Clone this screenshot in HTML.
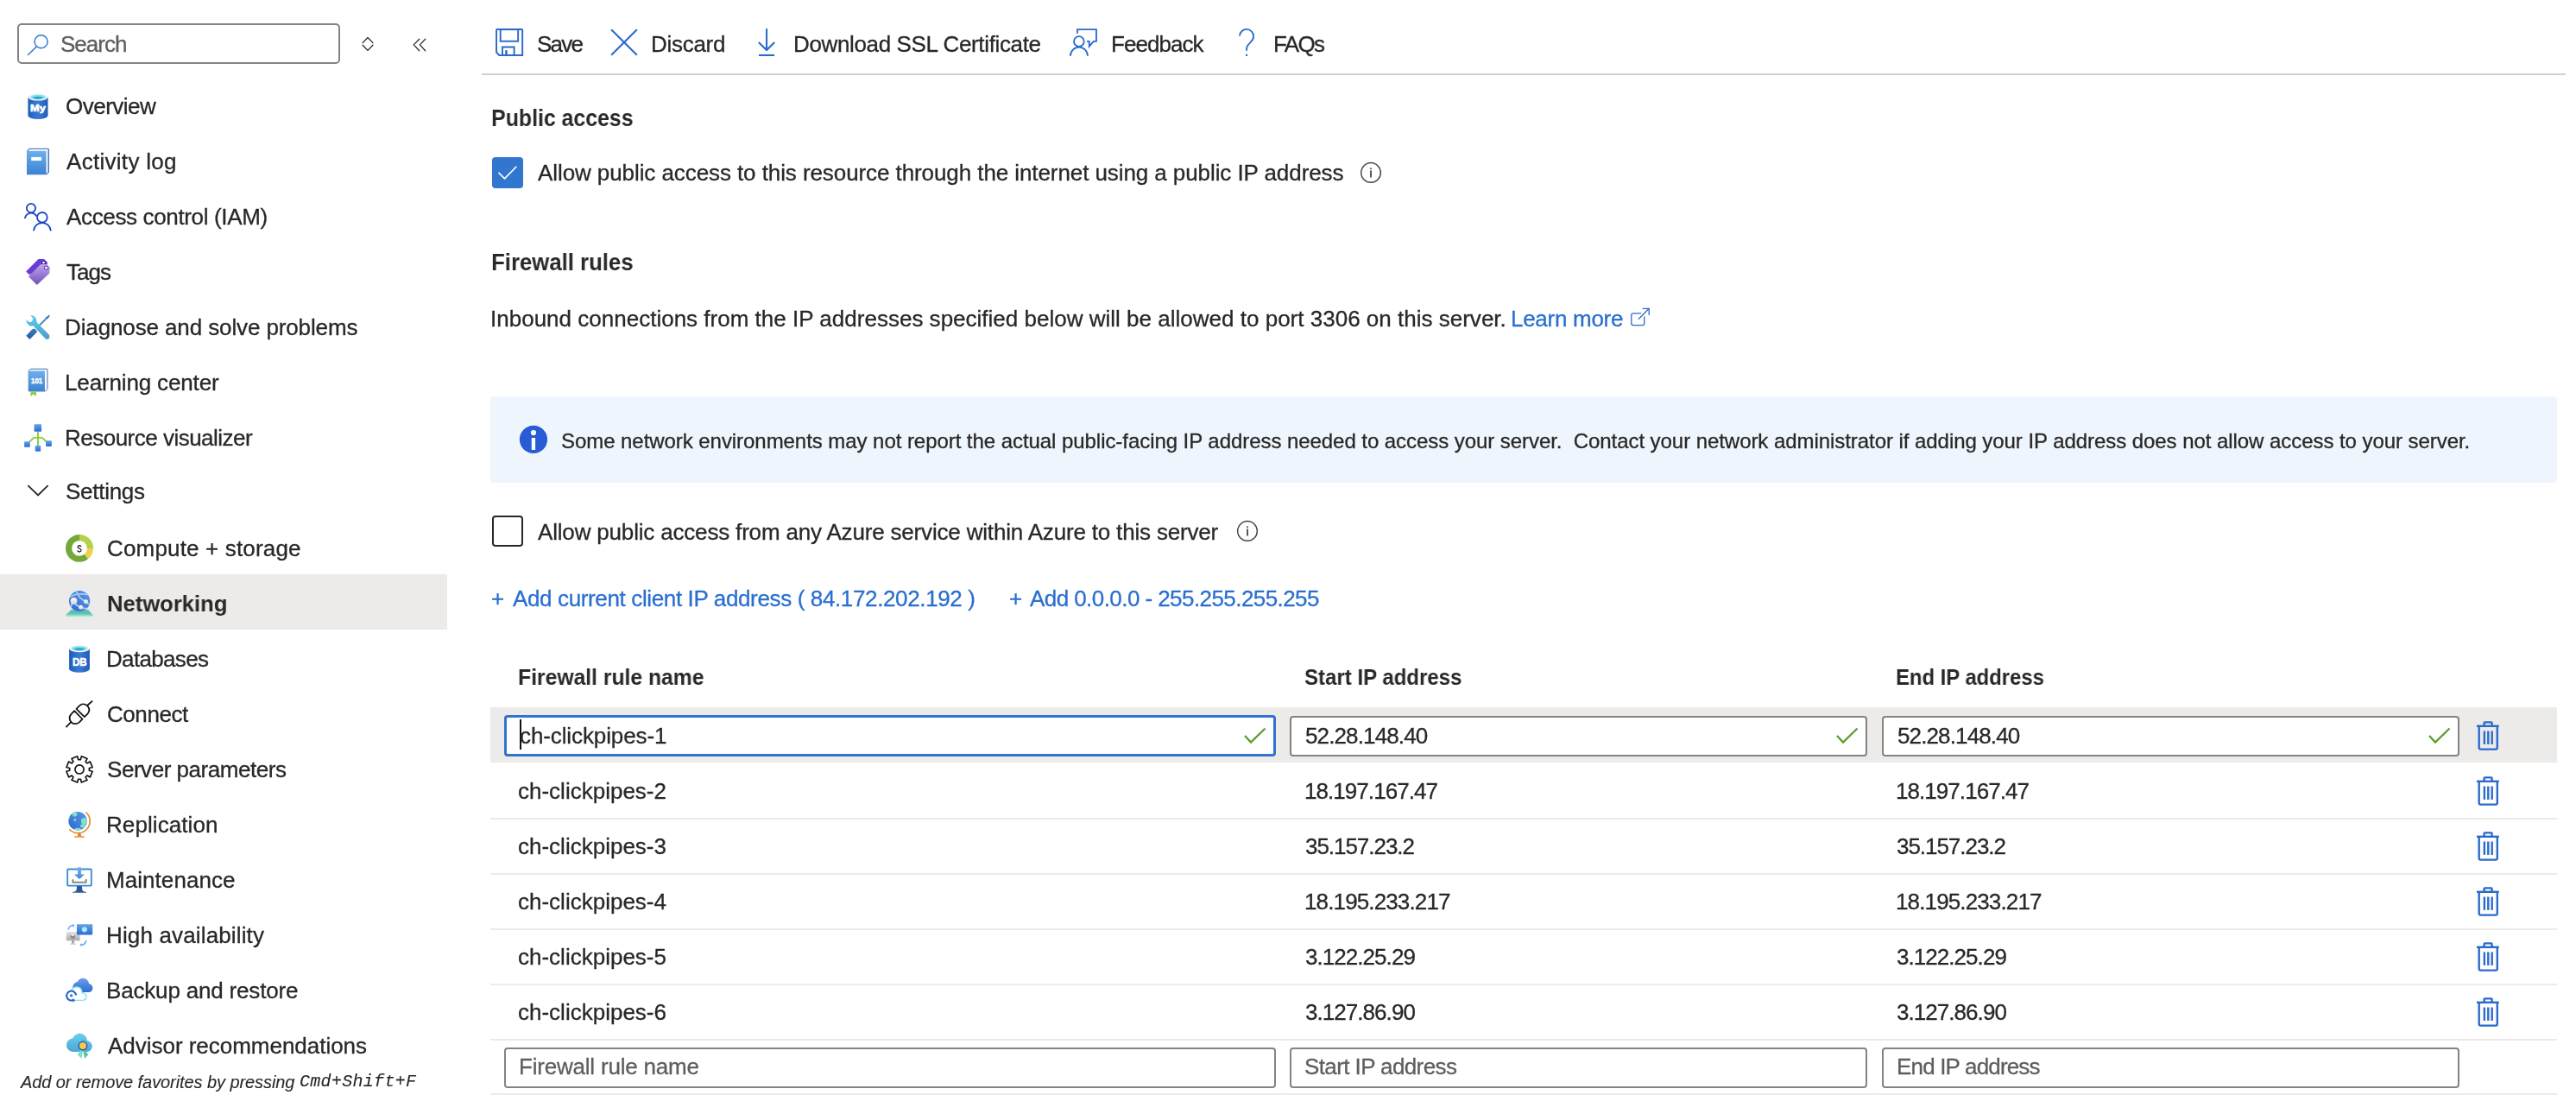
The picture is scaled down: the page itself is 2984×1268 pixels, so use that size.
<!DOCTYPE html>
<html><head><meta charset="utf-8">
<style>
html,body{margin:0;padding:0;background:#fff;}
body{width:2984px;height:1268px;position:relative;overflow:hidden;font-family:"Liberation Sans",sans-serif;}
.t{position:absolute;white-space:pre;-webkit-text-stroke:0.3px currentColor;will-change:transform;}
.a{position:absolute;}
svg.a{overflow:visible;}
.inp{position:absolute;box-sizing:border-box;border:2px solid #858381;border-radius:4px;background:#fff;}
.sep{position:absolute;left:568px;width:2394px;height:2px;background:#edebe9;}
</style></head><body>
<!-- search box -->
<div class="a" style="left:20px;top:27px;width:374px;height:47px;box-sizing:border-box;border:2px solid #858381;border-radius:5px"></div>
<!-- selected nav -->
<div class="a" style="left:0;top:665px;width:518px;height:64px;background:#edebe9"></div>
<!-- toolbar separator -->
<div class="a" style="left:558px;top:85px;width:2414px;height:2px;background:#d2d0ce"></div>
<!-- banner -->
<div class="a" style="left:568px;top:459px;width:2394px;height:100px;background:#eff5fd;border-radius:4px"></div>
<!-- checkboxes -->
<div class="a" style="left:570px;top:182px;width:36px;height:36px;background:#3276cf;border-radius:4px"></div>
<div class="a" style="left:570px;top:597px;width:36px;height:36px;box-sizing:border-box;border:2px solid #292827;border-radius:4px"></div>
<!-- table highlight row -->
<div class="a" style="left:568px;top:819px;width:2394px;height:64px;background:#edebe9"></div>
<div class="inp" style="left:584px;top:828px;width:894px;height:48px;border:3px solid #3074d0"></div>
<div class="inp" style="left:1494px;top:829px;width:669px;height:47px"></div>
<div class="inp" style="left:2180px;top:829px;width:669px;height:47px"></div>
<div class="sep" style="top:947px"></div>
<div class="sep" style="top:1011px"></div>
<div class="sep" style="top:1075px"></div>
<div class="sep" style="top:1139px"></div>
<div class="sep" style="top:1203px"></div>
<div class="sep" style="top:1266px"></div>
<div class="inp" style="left:584px;top:1213px;width:894px;height:47px"></div>
<div class="inp" style="left:1494px;top:1213px;width:669px;height:47px"></div>
<div class="inp" style="left:2180px;top:1213px;width:669px;height:47px"></div>
<svg width="0" height="0" style="position:absolute"><defs>
<linearGradient id="gCyl" x1="0" y1="0" x2="1" y2="0"><stop offset="0" stop-color="#1f5cb8"/><stop offset="0.5" stop-color="#3a7bd5"/><stop offset="1" stop-color="#1f5cb8"/></linearGradient>
<linearGradient id="gBook" x1="0" y1="0" x2="0" y2="1"><stop offset="0" stop-color="#6cb0ec"/><stop offset="1" stop-color="#3c82d6"/></linearGradient>
<linearGradient id="gTag" x1="0" y1="0" x2="0" y2="1"><stop offset="0" stop-color="#bea6ec"/><stop offset="1" stop-color="#7050bd"/></linearGradient>
<linearGradient id="gWr" x1="0" y1="0" x2="0" y2="1"><stop offset="0" stop-color="#60cdee"/><stop offset="1" stop-color="#4a9ccc"/></linearGradient>
<linearGradient id="gSd" x1="0" y1="0" x2="0" y2="1"><stop offset="0" stop-color="#3b7fbf"/><stop offset="1" stop-color="#2358a8"/></linearGradient>
<linearGradient id="gSq" x1="0" y1="0" x2="0" y2="1"><stop offset="0" stop-color="#64a2ec"/><stop offset="1" stop-color="#2a6ad2"/></linearGradient>
<linearGradient id="gGlobe" x1="1" y1="0" x2="0" y2="1"><stop offset="0" stop-color="#5d98e8"/><stop offset="1" stop-color="#2b68cf"/></linearGradient>
<linearGradient id="gNode" x1="0" y1="0" x2="0" y2="1"><stop offset="0" stop-color="#ffffff"/><stop offset="1" stop-color="#d4d4d4"/></linearGradient>
<linearGradient id="gArr" x1="0" y1="0" x2="0" y2="1"><stop offset="0" stop-color="#74b4ee"/><stop offset="1" stop-color="#3a86de"/></linearGradient>
<linearGradient id="gGray" x1="0" y1="0" x2="0" y2="1"><stop offset="0" stop-color="#e4e4e4"/><stop offset="1" stop-color="#aaaaaa"/></linearGradient>
<linearGradient id="gCloud" x1="0" y1="0" x2="0" y2="1"><stop offset="0" stop-color="#6e9fe8"/><stop offset="1" stop-color="#2e6dd0"/></linearGradient>
<linearGradient id="gCloud2" x1="0" y1="0" x2="0" y2="1"><stop offset="0" stop-color="#66d0f0"/><stop offset="1" stop-color="#4fa6d6"/></linearGradient>
<linearGradient id="gRib" x1="0" y1="0" x2="0" y2="1"><stop offset="0" stop-color="#9ad85a"/><stop offset="1" stop-color="#6cb53a"/></linearGradient>
<clipPath id="cpGlobe"><circle cx="505" cy="475" r="235"/></clipPath>
<clipPath id="cpNet"><circle cx="550" cy="505" r="265"/></clipPath>
</defs></svg>
<svg class="a" style="left:25px;top:27px" width="50" height="50" viewBox="0 0 1095 1095" ><g fill="none" stroke="#2f74d1" stroke-width="32"><circle cx="495" cy="465" r="165"/><line x1="378" y1="592" x2="165" y2="800" stroke-linecap="round"/></g></svg>
<svg class="a" style="left:400px;top:27px" width="110" height="50" viewBox="0 0 2409 1095" ><g fill="none" stroke="#323130" stroke-width="30" stroke-linecap="round" stroke-linejoin="round"><polyline points="440,495 570,360 700,495"/><polyline points="440,552 570,687 700,552"/><polyline points="1878,400 1735,545 1878,695"/><polyline points="2030,400 1890,545 2030,695"/></g></svg>
<svg class="a" style="left:20px;top:95px" width="50" height="50" viewBox="0 0 1095 1095" ><path d="M272,385 L272,852 A253.0,88 0 0 0 778,852 L778,385 Z" fill="url(#gCyl)"/>
<ellipse cx="525.0" cy="385" rx="253.0" ry="88" fill="#f2f2f2"/>
<ellipse cx="525.0" cy="381" rx="192.28" ry="59.84" fill="#6fe2fa"/>
<ellipse cx="525.0" cy="399" rx="126.5" ry="33.44" fill="#3c9dc4"/>
<text x="330" y="735" font-family="Liberation Sans" font-weight="bold" font-size="230" fill="#fff" stroke="#fff" stroke-width="14" textLength="390" lengthAdjust="spacingAndGlyphs">My</text></svg>
<svg class="a" style="left:67px;top:737px" width="50" height="50" viewBox="0 0 1095 1095" ><path d="M287,310 L287,827 A260.5,88 0 0 0 808,827 L808,310 Z" fill="url(#gCyl)"/>
<ellipse cx="547.5" cy="310" rx="260.5" ry="88" fill="#f2f2f2"/>
<ellipse cx="547.5" cy="306" rx="197.98" ry="59.84" fill="#6fe2fa"/>
<ellipse cx="547.5" cy="324" rx="130.25" ry="33.44" fill="#3c9dc4"/>
<text x="370" y="740" font-family="Liberation Sans" font-weight="bold" font-size="300" fill="#fff" stroke="#fff" stroke-width="14" textLength="365" lengthAdjust="spacingAndGlyphs">DB</text></svg>
<svg class="a" style="left:20px;top:160px" width="50" height="50" viewBox="0 0 1095 1095" ><path d="M255,325 L310,268 L780,268 Q798,268 798,290 L798,860 L740,912 L255,912 Z" fill="#fff" stroke="#2a5ea8" stroke-width="22" stroke-linejoin="round"/>
<rect x="775" y="290" width="25" height="570" fill="#5d8fc4"/>
<rect x="245" y="325" width="490" height="590" rx="12" fill="url(#gBook)"/>
<rect x="355" y="480" width="260" height="90" fill="#fff"/></svg>
<svg class="a" style="left:20px;top:230px" width="50" height="50" viewBox="0 0 1095 1095" ><g fill="none" stroke="#1747c8" stroke-width="40" stroke-linecap="round">
<circle cx="350" cy="240" r="112"/><path d="M197,490 A160,160 0 0 1 488,440"/>
<circle cx="632" cy="478" r="128"/><path d="M418,800 A217,217 0 0 1 848,800"/></g></svg>
<svg class="a" style="left:20px;top:290px" width="50" height="50" viewBox="0 0 1095 1095" ><polygon points="220,535 535,218 680,218 765,303 762,360 310,620" fill="#6a3dd6"/>
<circle cx="668" cy="308" r="42" fill="#fff" stroke="#2a1870" stroke-width="22"/>
<polygon points="285,665 595,350 745,350 830,432 815,578 500,875" fill="url(#gTag)"/>
<circle cx="735" cy="440" r="44" fill="#fff" stroke="#5b3ab5" stroke-width="22"/></svg>
<svg class="a" style="left:20px;top:355px" width="50" height="50" viewBox="0 0 1095 1095" ><line x1="560" y1="480" x2="730" y2="310" stroke="#3a80bb" stroke-width="42"/>
<polygon points="700,290 805,212 832,228 765,325" fill="#3a80bb"/>
<polygon points="225,740 380,575 440,560 505,625 485,665 315,830" fill="url(#gSd)"/>
<path d="M330,222 C420,215 500,290 495,400 L800,705 C840,745 820,830 755,830 C730,830 715,815 700,800 L405,490 C320,510 240,470 225,330 L285,385 C320,405 370,395 390,345 C405,300 380,250 330,222 Z" fill="url(#gWr)"/></svg>
<svg class="a" style="left:20px;top:418px" width="50" height="50" viewBox="0 0 1095 1095" ><path d="M290,250 L335,202 L750,202 Q765,202 765,217 L765,710 L710,765 L290,765 Z" fill="#fff" stroke="#2b5aa0" stroke-width="20" stroke-linejoin="round"/>
<rect x="288" y="250" width="412" height="515" fill="url(#gBook)"/>
<text x="350" y="572" font-family="Liberation Sans" font-weight="bold" font-size="190" fill="#fff" stroke="#fff" stroke-width="10" textLength="290" lengthAdjust="spacingAndGlyphs">101</text>
<polygon points="340,765 480,765 480,895 410,840 340,895" fill="url(#gRib)"/></svg>
<svg class="a" style="left:20px;top:482px" width="50" height="50" viewBox="0 0 1095 1095" ><g fill="none" stroke="#86d03c" stroke-width="42" stroke-linejoin="round"><path d="M525,390 L525,745"/><path d="M310,650 L420,545 L630,545 L735,640"/></g>
<g fill="url(#gSq)"><rect x="430" y="200" width="185" height="190" rx="14"/><rect x="178" y="640" width="147" height="145" rx="14"/><rect x="725" y="620" width="147" height="145" rx="14"/><rect x="455" y="745" width="140" height="145" rx="14"/></g></svg>
<svg class="a" style="left:20px;top:543px" width="50" height="50" viewBox="0 0 1095 1095" ><polyline points="270,420 527,668 780,420" fill="none" stroke="#292827" stroke-width="40"/></svg>
<svg class="a" style="left:67px;top:610px" width="50" height="50" viewBox="0 0 1095 1095" ><g transform="rotate(-90 548 545)" fill="none" stroke-width="155">
<circle cx="548" cy="545" r="272.5" stroke="#b3d14c" stroke-dasharray="428.0 1712.2"/>
<circle cx="548" cy="545" r="272.5" stroke="#f2d14a" stroke-dasharray="0 428.0 237.8 1712.2"/>
<circle cx="548" cy="545" r="272.5" stroke="#74a93a" stroke-dasharray="0 665.8 1046.3 1712.2"/></g>
<path d="M588,495 C565,468 505,470 505,515 C505,560 592,548 592,595 C592,640 520,645 498,608" fill="none" stroke="#111" stroke-width="26" stroke-linecap="round"/><line x1="550" y1="462" x2="550" y2="478" stroke="#111" stroke-width="22"/><line x1="540" y1="628" x2="540" y2="645" stroke="#111" stroke-width="22"/></svg>
<svg class="a" style="left:67px;top:673px" width="50" height="50" viewBox="0 0 1095 1095" ><polygon points="200,860 340,725 770,725 895,860" fill="#66bfae"/>
<rect x="200" y="842" width="695" height="52" rx="24" fill="#7ae8d2"/>
<circle cx="550" cy="505" r="265" fill="url(#gGlobe)"/>
<g clip-path="url(#cpNet)" fill="none" stroke="#a9cdf0" stroke-width="38"><path d="M300,400 C420,320 580,300 800,350"/><path d="M460,250 L560,420 L700,520 L820,600"/><path d="M330,600 L410,560 L590,680 L800,700"/><path d="M330,660 L360,560"/></g>
<circle cx="405" cy="500" r="85" fill="url(#gNode)"/><circle cx="712" cy="520" r="55" fill="url(#gNode)"/><circle cx="585" cy="660" r="55" fill="url(#gNode)"/></svg>
<svg class="a" style="left:67px;top:801px" width="50" height="50" viewBox="0 0 1095 1095" ><g fill="none" stroke="#111" stroke-width="38" stroke-linejoin="round">
<line x1="205" y1="900" x2="345" y2="760"/><line x1="745" y1="350" x2="880" y2="232"/>
<path d="M420,485 L625,695 L540,780 C470,835 370,820 330,760 C280,690 300,610 345,560 Z"/>
<path d="M470,435 L675,640 L760,555 C810,490 800,410 745,355 C680,300 600,300 550,355 Z"/></g></svg>
<svg class="a" style="left:67px;top:865px" width="50" height="50" viewBox="0 0 1095 1095" ><g fill="none" stroke="#111" stroke-width="36" stroke-linejoin="round"><path d="M600,237 L745,297 L702,371 L745,414 L819,371 L879,516 L796,538 L796,598 L879,620 L819,765 L745,722 L702,765 L745,839 L600,899 L578,816 L518,816 L496,899 L351,839 L394,765 L351,722 L277,765 L217,620 L300,598 L300,538 L217,516 L277,371 L351,414 L394,371 L351,297 L496,237 L518,320 L578,320 Z"/><circle cx="548" cy="568" r="112"/></g></svg>
<svg class="a" style="left:67px;top:929px" width="50" height="50" viewBox="0 0 1095 1095" ><circle cx="505" cy="475" r="235" fill="url(#gGlobe)"/>
<g clip-path="url(#cpGlobe)" fill="#7de3c5"><circle cx="430" cy="300" r="62"/><circle cx="280" cy="390" r="30"/><circle cx="435" cy="450" r="32"/><ellipse cx="665" cy="480" rx="75" ry="85"/><ellipse cx="640" cy="600" rx="70" ry="45"/><ellipse cx="510" cy="700" rx="90" ry="50"/></g>
<path d="M722,262 A300,300 0 0 1 300,695" fill="none" stroke="#e8872e" stroke-width="36" stroke-linecap="round"/>
<polygon points="520,790 575,790 600,860 495,860" fill="#e07a25"/><rect x="420" y="860" width="255" height="35" rx="12" fill="#e8872e"/></svg>
<svg class="a" style="left:67px;top:993px" width="50" height="50" viewBox="0 0 1095 1095" ><rect x="245" y="295" width="605" height="420" rx="18" fill="#fff" stroke="#3a8ad8" stroke-width="40"/>
<polygon points="485,720 610,720 620,820 650,860 720,878 720,895 375,895 375,878 445,860 475,820" fill="#2d55a0"/>
<path d="M380,570 L380,630 L715,630 L715,570" fill="none" stroke="#8a8a8a" stroke-width="48" stroke-linecap="round" stroke-linejoin="round"/>
<path d="M505,245 L590,245 L590,425 L680,425 L548,550 L415,425 L505,425 Z" fill="url(#gArr)"/></svg>
<svg class="a" style="left:67px;top:1057px" width="50" height="50" viewBox="0 0 1095 1095" ><rect x="215" y="480" width="345" height="225" rx="12" fill="url(#gGray)"/>
<rect x="355" y="705" width="60" height="60" fill="#959595"/><polygon points="300,805 470,805 420,760 350,760" fill="#c8c8c8"/>
<polygon points="380,525 440,560 440,630 380,665 320,630 320,560" fill="#8a8a8a"/><polygon points="380,525 440,560 380,595 320,560" fill="#eeeeee"/>
<rect x="480" y="290" width="400" height="270" rx="10" fill="url(#gSq)"/>
<polygon points="675,350 740,388 740,462 675,500 610,462 610,388" fill="#aeeaf8"/>
<g fill="none" stroke="#6ea8ef" stroke-width="38"><path d="M265,430 A120,120 0 0 1 385,320"/><path d="M715,705 A120,120 0 0 1 595,815"/></g>
<polygon points="380,275 428,325 380,372" fill="#6ea8ef"/><polygon points="600,765 555,812 600,862" fill="#6ea8ef"/></svg>
<svg class="a" style="left:67px;top:1121px" width="50" height="50" viewBox="0 0 1095 1095" ><path d="M380,520 C370,420 430,360 500,350 C530,280 590,255 640,258 C720,260 780,320 790,395 C850,410 890,460 885,520 C880,580 830,615 780,615 L420,615 Z" fill="url(#gCloud)"/>
<path d="M340,580 C380,490 460,470 520,485 C590,505 615,560 612,628 C680,640 722,680 722,730 C718,790 680,818 620,818 L420,818 C330,818 300,700 340,580 Z" fill="#fff" stroke="#7de3f7" stroke-width="30"/>
<circle cx="342" cy="700" r="112" fill="#fff"/><path d="M462,690 A120,120 0 1 0 395,810" fill="none" stroke="#2363d0" stroke-width="45"/>
<polygon points="380,765 445,815 380,870" fill="#2f6fd6"/>
<circle cx="342" cy="698" r="38" fill="#3a78d8"/></svg>
<svg class="a" style="left:67px;top:1185px" width="50" height="50" viewBox="0 0 1095 1095" ><path d="M220,560 C220,450 300,390 375,385 C410,310 480,258 555,258 C660,258 740,340 745,440 C820,460 875,520 870,590 C865,670 800,720 740,720 L390,720 C290,720 220,650 220,560 Z" fill="url(#gCloud2)"/>
<polygon points="570,680 635,690 600,890 500,800" fill="#76e0c8"/><polygon points="640,690 700,680 770,800 680,890" fill="#5fc0ae"/>
<circle cx="635" cy="570" r="120" fill="#2b5bb5"/><circle cx="635" cy="570" r="88" fill="#f5cb45"/></svg>
<svg class="a" style="left:565px;top:24px" width="50" height="50" viewBox="0 0 1095 1095" ><g fill="none" stroke="#2b6acb" stroke-width="42" stroke-linejoin="miter">
<path d="M220,235 L238,218 L862,218 L880,235 L880,875 L292,875 L220,800 Z"/>
<rect x="322" y="222" width="448" height="298"/>
<path d="M372,870 L372,668 L670,668 L670,870"/>
<line x1="470" y1="748" x2="470" y2="870" stroke-width="55"/></g></svg>
<svg class="a" style="left:698px;top:24px" width="50" height="50" viewBox="0 0 1095 1095" ><g stroke="#2b6acb" stroke-width="46"><line x1="222" y1="222" x2="872" y2="872"/><line x1="872" y1="222" x2="222" y2="872"/></g></svg>
<svg class="a" style="left:862px;top:24px" width="50" height="50" viewBox="0 0 1095 1095" ><g fill="none" stroke="#2b6acb" stroke-width="46"><line x1="570" y1="200" x2="570" y2="745"/><polyline points="368,545 570,747 772,545"/><line x1="372" y1="875" x2="768" y2="875"/></g></svg>
<svg class="a" style="left:1230px;top:24px" width="50" height="50" viewBox="0 0 1095 1095" ><g fill="none" stroke="#2b6acb" stroke-width="40">
<circle cx="435" cy="525" r="128"/><path d="M218,890 A218,218 0 0 1 655,890"/>
<path d="M395,322 L395,220 L875,220 L875,522 L805,522 L695,650 L695,522 L635,522"/></g></svg>
<svg class="a" style="left:1419px;top:24px" width="50" height="50" viewBox="0 0 1095 1095" ><g fill="none" stroke="#2b6acb" stroke-width="40">
<path d="M370,385 C380,280 460,218 548,218 C650,218 725,300 725,400 C725,470 690,510 640,555 C580,610 548,640 548,720 L548,760"/></g>
<rect x="525" y="850" width="46" height="46" fill="#2b6acb"/></svg>
<svg class="a" style="left:560px;top:170px" width="60" height="60" viewBox="0 0 1095 1095" ><polyline points="320,545 448,672 700,415" fill="none" stroke="#fff" stroke-width="32"/></svg>
<svg class="a" style="left:1568px;top:180px" width="40" height="40" viewBox="0 0 1095 1095" ><circle cx="548" cy="545" r="310" fill="none" stroke="#4a4948" stroke-width="40"/><circle cx="548" cy="415" r="28" fill="#4a4948"/><line x1="548" y1="495" x2="548" y2="680" stroke="#4a4948" stroke-width="50" stroke-linecap="round"/></svg>
<svg class="a" style="left:1425px;top:595px" width="40" height="40" viewBox="0 0 1095 1095" ><circle cx="548" cy="545" r="310" fill="none" stroke="#4a4948" stroke-width="40"/><circle cx="548" cy="415" r="28" fill="#4a4948"/><line x1="548" y1="495" x2="548" y2="680" stroke="#4a4948" stroke-width="50" stroke-linecap="round"/></svg>
<svg class="a" style="left:1880px;top:345px" width="40" height="40" viewBox="0 0 1095 1095" ><g fill="none" stroke="#2b6acb" stroke-width="36" stroke-linecap="round"><path d="M565,488 L322,488 Q268,488 268,542 L268,810 Q268,865 322,865 L622,865 Q678,865 678,810 L678,598"/><line x1="502" y1="662" x2="822" y2="340"/><polyline points="632,338 825,338 828,532"/></g></svg>
<svg class="a" style="left:595px;top:485px" width="50" height="50" viewBox="0 0 1095 1095" ><circle cx="503" cy="523" r="352" fill="#275cd4"/><circle cx="503" cy="352" r="68" fill="#fff"/><rect x="455" y="482" width="95" height="306" fill="#fff"/></svg>
<svg class="a" style="left:1440px;top:840px" width="28" height="24" viewBox="0 0 28 24"><polyline points="2,12 9,19.5 25.5,3.5" fill="none" stroke="#5a9e2c" stroke-width="2.3"/></svg>
<svg class="a" style="left:2126px;top:840px" width="28" height="24" viewBox="0 0 28 24"><polyline points="2,12 9,19.5 25.5,3.5" fill="none" stroke="#5a9e2c" stroke-width="2.3"/></svg>
<svg class="a" style="left:2812px;top:840px" width="28" height="24" viewBox="0 0 28 24"><polyline points="2,12 9,19.5 25.5,3.5" fill="none" stroke="#5a9e2c" stroke-width="2.3"/></svg>
<svg class="a" style="left:2866px;top:834px" width="32" height="36" viewBox="0 0 32 36"><g fill="none" stroke="#2b6acb" stroke-width="2.4"><line x1="3" y1="6.8" x2="28.8" y2="6.8"/><path d="M11.6,6.8 L11.6,3.2 Q11.6,2.4 12.4,2.4 L19.8,2.4 Q20.6,2.4 20.6,3.2 L20.6,6.8"/><path d="M5.7,6.8 L5.7,31.8 Q5.7,33.6 7.5,33.6 L25,33.6 Q26.8,33.6 26.8,31.8 L26.8,6.8"/><line x1="11.9" y1="12.5" x2="11.9" y2="27.9"/><line x1="16.3" y1="12.5" x2="16.3" y2="27.9"/><line x1="20.7" y1="12.5" x2="20.7" y2="27.9"/></g></svg>
<svg class="a" style="left:2866px;top:898px" width="32" height="36" viewBox="0 0 32 36"><g fill="none" stroke="#2b6acb" stroke-width="2.4"><line x1="3" y1="6.8" x2="28.8" y2="6.8"/><path d="M11.6,6.8 L11.6,3.2 Q11.6,2.4 12.4,2.4 L19.8,2.4 Q20.6,2.4 20.6,3.2 L20.6,6.8"/><path d="M5.7,6.8 L5.7,31.8 Q5.7,33.6 7.5,33.6 L25,33.6 Q26.8,33.6 26.8,31.8 L26.8,6.8"/><line x1="11.9" y1="12.5" x2="11.9" y2="27.9"/><line x1="16.3" y1="12.5" x2="16.3" y2="27.9"/><line x1="20.7" y1="12.5" x2="20.7" y2="27.9"/></g></svg>
<svg class="a" style="left:2866px;top:962px" width="32" height="36" viewBox="0 0 32 36"><g fill="none" stroke="#2b6acb" stroke-width="2.4"><line x1="3" y1="6.8" x2="28.8" y2="6.8"/><path d="M11.6,6.8 L11.6,3.2 Q11.6,2.4 12.4,2.4 L19.8,2.4 Q20.6,2.4 20.6,3.2 L20.6,6.8"/><path d="M5.7,6.8 L5.7,31.8 Q5.7,33.6 7.5,33.6 L25,33.6 Q26.8,33.6 26.8,31.8 L26.8,6.8"/><line x1="11.9" y1="12.5" x2="11.9" y2="27.9"/><line x1="16.3" y1="12.5" x2="16.3" y2="27.9"/><line x1="20.7" y1="12.5" x2="20.7" y2="27.9"/></g></svg>
<svg class="a" style="left:2866px;top:1026px" width="32" height="36" viewBox="0 0 32 36"><g fill="none" stroke="#2b6acb" stroke-width="2.4"><line x1="3" y1="6.8" x2="28.8" y2="6.8"/><path d="M11.6,6.8 L11.6,3.2 Q11.6,2.4 12.4,2.4 L19.8,2.4 Q20.6,2.4 20.6,3.2 L20.6,6.8"/><path d="M5.7,6.8 L5.7,31.8 Q5.7,33.6 7.5,33.6 L25,33.6 Q26.8,33.6 26.8,31.8 L26.8,6.8"/><line x1="11.9" y1="12.5" x2="11.9" y2="27.9"/><line x1="16.3" y1="12.5" x2="16.3" y2="27.9"/><line x1="20.7" y1="12.5" x2="20.7" y2="27.9"/></g></svg>
<svg class="a" style="left:2866px;top:1090px" width="32" height="36" viewBox="0 0 32 36"><g fill="none" stroke="#2b6acb" stroke-width="2.4"><line x1="3" y1="6.8" x2="28.8" y2="6.8"/><path d="M11.6,6.8 L11.6,3.2 Q11.6,2.4 12.4,2.4 L19.8,2.4 Q20.6,2.4 20.6,3.2 L20.6,6.8"/><path d="M5.7,6.8 L5.7,31.8 Q5.7,33.6 7.5,33.6 L25,33.6 Q26.8,33.6 26.8,31.8 L26.8,6.8"/><line x1="11.9" y1="12.5" x2="11.9" y2="27.9"/><line x1="16.3" y1="12.5" x2="16.3" y2="27.9"/><line x1="20.7" y1="12.5" x2="20.7" y2="27.9"/></g></svg>
<svg class="a" style="left:2866px;top:1154px" width="32" height="36" viewBox="0 0 32 36"><g fill="none" stroke="#2b6acb" stroke-width="2.4"><line x1="3" y1="6.8" x2="28.8" y2="6.8"/><path d="M11.6,6.8 L11.6,3.2 Q11.6,2.4 12.4,2.4 L19.8,2.4 Q20.6,2.4 20.6,3.2 L20.6,6.8"/><path d="M5.7,6.8 L5.7,31.8 Q5.7,33.6 7.5,33.6 L25,33.6 Q26.8,33.6 26.8,31.8 L26.8,6.8"/><line x1="11.9" y1="12.5" x2="11.9" y2="27.9"/><line x1="16.3" y1="12.5" x2="16.3" y2="27.9"/><line x1="20.7" y1="12.5" x2="20.7" y2="27.9"/></g></svg>
<div class="a" style="left:602px;top:833px;width:2px;height:35px;background:#111"></div>
<div class="t" style="left:69.50px;top:36.00px;font-family:&quot;Liberation Sans&quot;, sans-serif;font-size:26px;line-height:30px;font-weight:normal;font-style:normal;color:#605e5c;letter-spacing:-0.984px">Search</div>
<div class="t" style="left:75.50px;top:108.00px;font-family:&quot;Liberation Sans&quot;, sans-serif;font-size:26px;line-height:30px;font-weight:normal;font-style:normal;color:#292827;letter-spacing:-0.511px">Overview</div>
<div class="t" style="left:76.50px;top:172.00px;font-family:&quot;Liberation Sans&quot;, sans-serif;font-size:26px;line-height:30px;font-weight:normal;font-style:normal;color:#292827;letter-spacing:0.291px">Activity log</div>
<div class="t" style="left:76.50px;top:236.00px;font-family:&quot;Liberation Sans&quot;, sans-serif;font-size:26px;line-height:30px;font-weight:normal;font-style:normal;color:#292827;letter-spacing:-0.351px">Access control (IAM)</div>
<div class="t" style="left:76.50px;top:300.00px;font-family:&quot;Liberation Sans&quot;, sans-serif;font-size:26px;line-height:30px;font-weight:normal;font-style:normal;color:#292827;letter-spacing:-0.973px">Tags</div>
<div class="t" style="left:74.50px;top:364.00px;font-family:&quot;Liberation Sans&quot;, sans-serif;font-size:26px;line-height:30px;font-weight:normal;font-style:normal;color:#292827;letter-spacing:-0.117px">Diagnose and solve problems</div>
<div class="t" style="left:74.50px;top:428.00px;font-family:&quot;Liberation Sans&quot;, sans-serif;font-size:26px;line-height:30px;font-weight:normal;font-style:normal;color:#292827;letter-spacing:-0.144px">Learning center</div>
<div class="t" style="left:74.50px;top:492.00px;font-family:&quot;Liberation Sans&quot;, sans-serif;font-size:26px;line-height:30px;font-weight:normal;font-style:normal;color:#292827;letter-spacing:-0.512px">Resource visualizer</div>
<div class="t" style="left:75.50px;top:554.00px;font-family:&quot;Liberation Sans&quot;, sans-serif;font-size:26px;line-height:30px;font-weight:normal;font-style:normal;color:#292827;letter-spacing:-0.278px">Settings</div>
<div class="t" style="left:123.50px;top:620.00px;font-family:&quot;Liberation Sans&quot;, sans-serif;font-size:26px;line-height:30px;font-weight:normal;font-style:normal;color:#292827;letter-spacing:0.163px">Compute + storage</div>
<div class="t" style="left:122.50px;top:748.00px;font-family:&quot;Liberation Sans&quot;, sans-serif;font-size:26px;line-height:30px;font-weight:normal;font-style:normal;color:#292827;letter-spacing:-0.662px">Databases</div>
<div class="t" style="left:123.50px;top:812.00px;font-family:&quot;Liberation Sans&quot;, sans-serif;font-size:26px;line-height:30px;font-weight:normal;font-style:normal;color:#292827;letter-spacing:-0.436px">Connect</div>
<div class="t" style="left:123.50px;top:876.00px;font-family:&quot;Liberation Sans&quot;, sans-serif;font-size:26px;line-height:30px;font-weight:normal;font-style:normal;color:#292827;letter-spacing:-0.456px">Server parameters</div>
<div class="t" style="left:122.50px;top:940.00px;font-family:&quot;Liberation Sans&quot;, sans-serif;font-size:26px;line-height:30px;font-weight:normal;font-style:normal;color:#292827;letter-spacing:0.083px">Replication</div>
<div class="t" style="left:122.50px;top:1004.00px;font-family:&quot;Liberation Sans&quot;, sans-serif;font-size:26px;line-height:30px;font-weight:normal;font-style:normal;color:#292827;letter-spacing:0.058px">Maintenance</div>
<div class="t" style="left:122.50px;top:1068.00px;font-family:&quot;Liberation Sans&quot;, sans-serif;font-size:26px;line-height:30px;font-weight:normal;font-style:normal;color:#292827;letter-spacing:0.147px">High availability</div>
<div class="t" style="left:122.50px;top:1132.00px;font-family:&quot;Liberation Sans&quot;, sans-serif;font-size:26px;line-height:30px;font-weight:normal;font-style:normal;color:#292827;letter-spacing:-0.177px">Backup and restore</div>
<div class="t" style="left:124.50px;top:1196.00px;font-family:&quot;Liberation Sans&quot;, sans-serif;font-size:26px;line-height:30px;font-weight:normal;font-style:normal;color:#292827;letter-spacing:-0.026px">Advisor recommendations</div>
<div class="t" style="left:123.50px;top:684.00px;font-family:&quot;Liberation Sans&quot;, sans-serif;font-size:26px;line-height:30px;font-weight:bold;font-style:normal;color:#292827;letter-spacing:0.000px;transform:scaleX(0.9844);transform-origin:1.00px 0;-webkit-text-stroke:0">Networking</div>
<div class="t" style="left:621.50px;top:36.00px;font-family:&quot;Liberation Sans&quot;, sans-serif;font-size:26px;line-height:30px;font-weight:normal;font-style:normal;color:#292827;letter-spacing:-1.767px">Save</div>
<div class="t" style="left:754.00px;top:36.00px;font-family:&quot;Liberation Sans&quot;, sans-serif;font-size:26px;line-height:30px;font-weight:normal;font-style:normal;color:#292827;letter-spacing:-0.278px">Discard</div>
<div class="t" style="left:919.00px;top:36.00px;font-family:&quot;Liberation Sans&quot;, sans-serif;font-size:26px;line-height:30px;font-weight:normal;font-style:normal;color:#292827;letter-spacing:-0.361px">Download SSL Certificate</div>
<div class="t" style="left:1286.50px;top:36.00px;font-family:&quot;Liberation Sans&quot;, sans-serif;font-size:26px;line-height:30px;font-weight:normal;font-style:normal;color:#292827;letter-spacing:-0.955px">Feedback</div>
<div class="t" style="left:1475.00px;top:36.00px;font-family:&quot;Liberation Sans&quot;, sans-serif;font-size:26px;line-height:30px;font-weight:normal;font-style:normal;color:#292827;letter-spacing:-1.671px">FAQs</div>
<div class="t" style="left:568.50px;top:121.00px;font-family:&quot;Liberation Sans&quot;, sans-serif;font-size:28px;line-height:31px;font-weight:bold;font-style:normal;color:#292827;letter-spacing:0.000px;transform:scaleX(0.8875);transform-origin:1.00px 0;-webkit-text-stroke:0">Public access</div>
<div class="t" style="left:623.00px;top:185.00px;font-family:&quot;Liberation Sans&quot;, sans-serif;font-size:26px;line-height:30px;font-weight:normal;font-style:normal;color:#292827;letter-spacing:-0.084px">Allow public access to this resource through the internet using a public IP address</div>
<div class="t" style="left:568.50px;top:288.00px;font-family:&quot;Liberation Sans&quot;, sans-serif;font-size:28px;line-height:31px;font-weight:bold;font-style:normal;color:#292827;letter-spacing:0.000px;transform:scaleX(0.9189);transform-origin:1.00px 0;-webkit-text-stroke:0">Firewall rules</div>
<div class="t" style="left:567.50px;top:354.00px;font-family:&quot;Liberation Sans&quot;, sans-serif;font-size:26px;line-height:30px;font-weight:normal;font-style:normal;color:#292827;letter-spacing:0.008px">Inbound connections from the IP addresses specified below will be allowed to port 3306 on this server.</div>
<div class="t" style="left:1750.00px;top:354.00px;font-family:&quot;Liberation Sans&quot;, sans-serif;font-size:26px;line-height:30px;font-weight:normal;font-style:normal;color:#2a6fd0;letter-spacing:-0.278px">Learn more</div>
<div class="t" style="left:649.50px;top:497.00px;font-family:&quot;Liberation Sans&quot;, sans-serif;font-size:24px;line-height:27px;font-weight:normal;font-style:normal;color:#292827;letter-spacing:-0.057px">Some network environments may not report the actual public-facing IP address needed to access your server.  Contact your network administrator if adding your IP address does not allow access to your server.</div>
<div class="t" style="left:623.00px;top:600.50px;font-family:&quot;Liberation Sans&quot;, sans-serif;font-size:26px;line-height:30px;font-weight:normal;font-style:normal;color:#292827;letter-spacing:-0.178px">Allow public access from any Azure service within Azure to this server</div>
<div class="t" style="left:569.00px;top:678.00px;font-family:&quot;Liberation Sans&quot;, sans-serif;font-size:26px;line-height:30px;font-weight:normal;font-style:normal;color:#2a6fd0;letter-spacing:0.000px">+</div>
<div class="t" style="left:593.75px;top:678.00px;font-family:&quot;Liberation Sans&quot;, sans-serif;font-size:26px;line-height:30px;font-weight:normal;font-style:normal;color:#2a6fd0;letter-spacing:-0.365px">Add current client IP address ( 84.172.202.192 )</div>
<div class="t" style="left:1168.50px;top:678.00px;font-family:&quot;Liberation Sans&quot;, sans-serif;font-size:26px;line-height:30px;font-weight:normal;font-style:normal;color:#2a6fd0;letter-spacing:0.000px">+</div>
<div class="t" style="left:1193.00px;top:678.00px;font-family:&quot;Liberation Sans&quot;, sans-serif;font-size:26px;line-height:30px;font-weight:normal;font-style:normal;color:#2a6fd0;letter-spacing:-0.565px">Add 0.0.0.0 - 255.255.255.255</div>
<div class="t" style="left:600.00px;top:769.00px;font-family:&quot;Liberation Sans&quot;, sans-serif;font-size:26px;line-height:30px;font-weight:bold;font-style:normal;color:#292827;letter-spacing:0.000px;transform:scaleX(0.9494);transform-origin:1.00px 0;-webkit-text-stroke:0">Firewall rule name</div>
<div class="t" style="left:1510.50px;top:769.00px;font-family:&quot;Liberation Sans&quot;, sans-serif;font-size:26px;line-height:30px;font-weight:bold;font-style:normal;color:#292827;letter-spacing:0.000px;transform:scaleX(0.9240);transform-origin:0.00px 0;-webkit-text-stroke:0">Start IP address</div>
<div class="t" style="left:2195.50px;top:769.00px;font-family:&quot;Liberation Sans&quot;, sans-serif;font-size:26px;line-height:30px;font-weight:bold;font-style:normal;color:#292827;letter-spacing:0.000px;transform:scaleX(0.9164);transform-origin:1.00px 0;-webkit-text-stroke:0">End IP address</div>
<div class="t" style="left:602.00px;top:836.50px;font-family:&quot;Liberation Sans&quot;, sans-serif;font-size:26px;line-height:30px;font-weight:normal;font-style:normal;color:#292827;letter-spacing:-0.106px">ch-clickpipes-1</div>
<div class="t" style="left:1512.00px;top:836.50px;font-family:&quot;Liberation Sans&quot;, sans-serif;font-size:26px;line-height:30px;font-weight:normal;font-style:normal;color:#292827;letter-spacing:-0.873px">52.28.148.40</div>
<div class="t" style="left:2198.00px;top:836.50px;font-family:&quot;Liberation Sans&quot;, sans-serif;font-size:26px;line-height:30px;font-weight:normal;font-style:normal;color:#292827;letter-spacing:-0.873px">52.28.148.40</div>
<div class="t" style="left:599.50px;top:900.50px;font-family:&quot;Liberation Sans&quot;, sans-serif;font-size:26px;line-height:30px;font-weight:normal;font-style:normal;color:#292827;letter-spacing:0.001px">ch-clickpipes-2</div>
<div class="t" style="left:1510.50px;top:900.50px;font-family:&quot;Liberation Sans&quot;, sans-serif;font-size:26px;line-height:30px;font-weight:normal;font-style:normal;color:#292827;letter-spacing:-0.943px">18.197.167.47</div>
<div class="t" style="left:2196.00px;top:900.50px;font-family:&quot;Liberation Sans&quot;, sans-serif;font-size:26px;line-height:30px;font-weight:normal;font-style:normal;color:#292827;letter-spacing:-0.943px">18.197.167.47</div>
<div class="t" style="left:599.50px;top:964.50px;font-family:&quot;Liberation Sans&quot;, sans-serif;font-size:26px;line-height:30px;font-weight:normal;font-style:normal;color:#292827;letter-spacing:0.001px">ch-clickpipes-3</div>
<div class="t" style="left:1511.50px;top:964.50px;font-family:&quot;Liberation Sans&quot;, sans-serif;font-size:26px;line-height:30px;font-weight:normal;font-style:normal;color:#292827;letter-spacing:-1.039px">35.157.23.2</div>
<div class="t" style="left:2197.00px;top:964.50px;font-family:&quot;Liberation Sans&quot;, sans-serif;font-size:26px;line-height:30px;font-weight:normal;font-style:normal;color:#292827;letter-spacing:-1.039px">35.157.23.2</div>
<div class="t" style="left:599.50px;top:1028.50px;font-family:&quot;Liberation Sans&quot;, sans-serif;font-size:26px;line-height:30px;font-weight:normal;font-style:normal;color:#292827;letter-spacing:0.001px">ch-clickpipes-4</div>
<div class="t" style="left:1510.50px;top:1028.50px;font-family:&quot;Liberation Sans&quot;, sans-serif;font-size:26px;line-height:30px;font-weight:normal;font-style:normal;color:#292827;letter-spacing:-0.867px">18.195.233.217</div>
<div class="t" style="left:2196.00px;top:1028.50px;font-family:&quot;Liberation Sans&quot;, sans-serif;font-size:26px;line-height:30px;font-weight:normal;font-style:normal;color:#292827;letter-spacing:-0.867px">18.195.233.217</div>
<div class="t" style="left:599.50px;top:1092.50px;font-family:&quot;Liberation Sans&quot;, sans-serif;font-size:26px;line-height:30px;font-weight:normal;font-style:normal;color:#292827;letter-spacing:0.001px">ch-clickpipes-5</div>
<div class="t" style="left:1511.50px;top:1092.50px;font-family:&quot;Liberation Sans&quot;, sans-serif;font-size:26px;line-height:30px;font-weight:normal;font-style:normal;color:#292827;letter-spacing:-0.949px">3.122.25.29</div>
<div class="t" style="left:2197.00px;top:1092.50px;font-family:&quot;Liberation Sans&quot;, sans-serif;font-size:26px;line-height:30px;font-weight:normal;font-style:normal;color:#292827;letter-spacing:-0.949px">3.122.25.29</div>
<div class="t" style="left:599.50px;top:1156.50px;font-family:&quot;Liberation Sans&quot;, sans-serif;font-size:26px;line-height:30px;font-weight:normal;font-style:normal;color:#292827;letter-spacing:0.001px">ch-clickpipes-6</div>
<div class="t" style="left:1511.50px;top:1156.50px;font-family:&quot;Liberation Sans&quot;, sans-serif;font-size:26px;line-height:30px;font-weight:normal;font-style:normal;color:#292827;letter-spacing:-0.949px">3.127.86.90</div>
<div class="t" style="left:2197.00px;top:1156.50px;font-family:&quot;Liberation Sans&quot;, sans-serif;font-size:26px;line-height:30px;font-weight:normal;font-style:normal;color:#292827;letter-spacing:-0.949px">3.127.86.90</div>
<div class="t" style="left:601.00px;top:1220.30px;font-family:&quot;Liberation Sans&quot;, sans-serif;font-size:26px;line-height:30px;font-weight:normal;font-style:normal;color:#605e5c;letter-spacing:-0.203px">Firewall rule name</div>
<div class="t" style="left:1511.40px;top:1220.30px;font-family:&quot;Liberation Sans&quot;, sans-serif;font-size:26px;line-height:30px;font-weight:normal;font-style:normal;color:#605e5c;letter-spacing:-0.601px">Start IP address</div>
<div class="t" style="left:2196.50px;top:1220.30px;font-family:&quot;Liberation Sans&quot;, sans-serif;font-size:26px;line-height:30px;font-weight:normal;font-style:normal;color:#605e5c;letter-spacing:-0.829px">End IP address</div>
<div class="t" style="left:24.30px;top:1242.00px;font-family:&quot;Liberation Sans&quot;, sans-serif;font-size:20px;line-height:22px;font-weight:normal;font-style:italic;color:#292827;letter-spacing:-0.080px;-webkit-text-stroke:0.1px currentColor">Add or remove favorites by pressing</div>
<div class="t" style="left:347.40px;top:1242.00px;font-family:&quot;Liberation Mono&quot;, monospace;font-size:20px;line-height:22px;font-weight:normal;font-style:italic;color:#292827;letter-spacing:0.298px;-webkit-text-stroke:0.1px currentColor">Cmd+Shift+F</div>
</body></html>
